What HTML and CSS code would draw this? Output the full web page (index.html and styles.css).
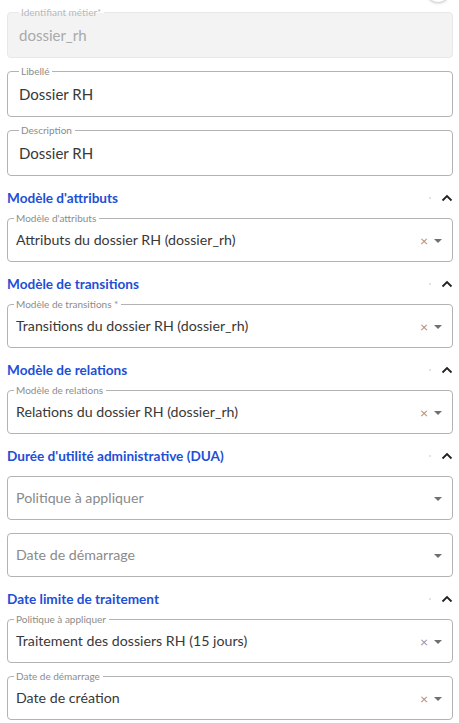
FILE: index.html
```html
<!DOCTYPE html>
<html lang="fr">
<head>
<meta charset="utf-8">
<title>Formulaire</title>
<link rel="stylesheet" href="styles.css">
</head>
<body>
<div class="corner-shadow"></div>
<main class="form">
  <div class="field text disabled">
    <span class="legend">Identifiant métier*</span>
    <span class="value">dossier_rh</span>
  </div>
  <div class="field text">
    <span class="legend">Libellé</span>
    <span class="value">Dossier RH</span>
  </div>
  <div class="field text">
    <span class="legend">Description</span>
    <span class="value">Dossier RH</span>
  </div>

  <div class="section-head">
    <span class="title">Modèle d'attributs</span>
    <span class="dot"></span>
    <svg class="chev" width="12" height="8" viewBox="0 0 12 8"><path d="M1.5 6.5 L6 2 L10.5 6.5" fill="none" stroke="#222" stroke-width="1.8"/></svg>
  </div>
  <div class="field select">
    <span class="legend">Modèle d'attributs</span>
    <span class="value">Attributs du dossier RH (dossier_rh)</span>
    <span class="clear">×</span>
    <span class="caret"></span>
  </div>

  <div class="section-head">
    <span class="title">Modèle de transitions</span>
    <span class="dot"></span>
    <svg class="chev" width="12" height="8" viewBox="0 0 12 8"><path d="M1.5 6.5 L6 2 L10.5 6.5" fill="none" stroke="#222" stroke-width="1.8"/></svg>
  </div>
  <div class="field select">
    <span class="legend">Modèle de transitions *</span>
    <span class="value">Transitions du dossier RH (dossier_rh)</span>
    <span class="clear">×</span>
    <span class="caret"></span>
  </div>

  <div class="section-head">
    <span class="title">Modèle de relations</span>
    <span class="dot"></span>
    <svg class="chev" width="12" height="8" viewBox="0 0 12 8"><path d="M1.5 6.5 L6 2 L10.5 6.5" fill="none" stroke="#222" stroke-width="1.8"/></svg>
  </div>
  <div class="field select">
    <span class="legend">Modèle de relations</span>
    <span class="value">Relations du dossier RH (dossier_rh)</span>
    <span class="clear">×</span>
    <span class="caret"></span>
  </div>

  <div class="section-head">
    <span class="title">Durée d'utilité administrative (DUA)</span>
    <span class="dot"></span>
    <svg class="chev" width="12" height="8" viewBox="0 0 12 8"><path d="M1.5 6.5 L6 2 L10.5 6.5" fill="none" stroke="#222" stroke-width="1.8"/></svg>
  </div>
  <div class="field select">
    <span class="value placeholder">Politique à appliquer</span>
    <span class="caret"></span>
  </div>
  <div class="field select">
    <span class="value placeholder">Date de démarrage</span>
    <span class="caret"></span>
  </div>

  <div class="section-head">
    <span class="title">Date limite de traitement</span>
    <span class="dot"></span>
    <svg class="chev" width="12" height="8" viewBox="0 0 12 8"><path d="M1.5 6.5 L6 2 L10.5 6.5" fill="none" stroke="#222" stroke-width="1.8"/></svg>
  </div>
  <div class="field select">
    <span class="legend">Politique à appliquer</span>
    <span class="value">Traitement des dossiers RH (15 jours)</span>
    <span class="clear">×</span>
    <span class="caret"></span>
  </div>
  <div class="field select">
    <span class="legend">Date de démarrage</span>
    <span class="value">Date de création</span>
    <span class="clear">×</span>
    <span class="caret"></span>
  </div>
</main>
</body>
</html>
```

FILE: styles.css
```css
html, body {
  margin: 0;
  padding: 0;
  background: #fff;
}
body {
  font-family: Lato, "Noto Sans", sans-serif;
  color: #333;
  position: relative;
  overflow: hidden;
}
.corner-shadow {
  position: absolute;
  top: -14px;
  left: 428px;
  width: 20px;
  height: 16px;
  border-radius: 50%;
  box-shadow: 0 1px 3px rgba(0,0,0,0.25);
  background: #fff;
}
.form {
  display: flex;
  flex-direction: column;
  padding: 12px 6px 0 7px;
}
.field {
  position: relative;
  display: flex;
  align-items: center;
  height: 46px;
  box-sizing: border-box;
  border: 1px solid #b3b3b3;
  border-radius: 4px;
  margin-bottom: 13px;
}
.field.select {
  height: 44px;
  padding: 0 10px 0 8px;
}
.field.text {
  padding: 0 10px 0 11px;
}
.field.disabled {
  background: #f3f3f3;
  border-color: #e8e8e8;
}
.legend {
  position: absolute;
  top: -7px;
  left: 11px;
  padding: 0 3px 0 2px;
  font-size: 10px;
  line-height: 12px;
  color: #8c8c8c;
  background: #fff;
}
.disabled .legend {
  color: #b8b8b8;
  background: linear-gradient(#fff 0 7px, #f3f3f3 7px);
}
.select .legend {
  left: 6px;
}
.value {
  flex: 1;
  font-size: 15px;
  line-height: 18px;
  color: #383838;
  white-space: nowrap;
}
.select .value {
  font-size: 14.2px;
}
.disabled .value {
  color: #a9a9a9;
}
.value.placeholder {
  color: #8a8a8a;
}
.clear {
  font-size: 14px;
  line-height: 14px;
  color: #a58f8f;
  margin-right: 6px;
  margin-top: 2px;
}
.caret {
  width: 0;
  height: 0;
  border-left: 4px solid transparent;
  border-right: 4px solid transparent;
  border-top: 4px solid #707070;
  margin-top: 2px;
}
.section-head {
  display: flex;
  align-items: center;
  height: 20px;
  margin: -1.5px 0 10.5px 0;
}
.section-head .title {
  flex: 1;
  font-size: 13.6px;
  font-weight: 700;
  color: #1e4fd6;
}
.section-head .dot {
  width: 2px;
  height: 2px;
  background: #e3e3e3;
  margin-right: 10px;
}
```
